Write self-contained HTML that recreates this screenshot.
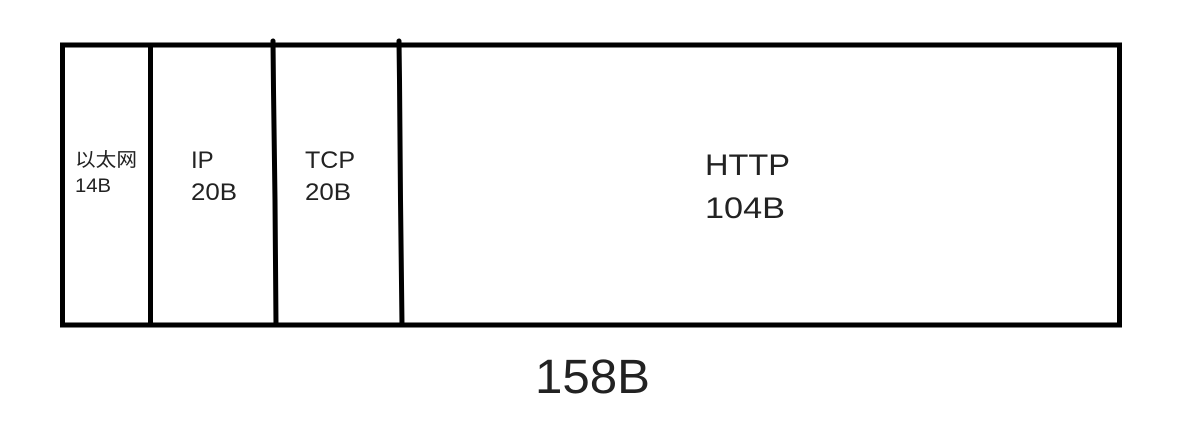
<!DOCTYPE html>
<html><head><meta charset="utf-8"><style>
html,body{margin:0;padding:0;background:#fff;width:1202px;height:447px;overflow:hidden}
svg{display:block}
text{font-family:"Liberation Sans","Noto Sans CJK SC",sans-serif;fill:#222}
</style></head><body>
<svg width="1202" height="447" viewBox="0 0 1202 447">
<rect x="62.5" y="45" width="1057" height="280" fill="none" stroke="#000" stroke-width="5"/>
<line x1="150.5" y1="45" x2="150.5" y2="325" stroke="#000" stroke-width="5"/>
<path d="M273 41 L273.5 90 L275 200 L276 325" fill="none" stroke="#000" stroke-width="5" stroke-linecap="round"/>
<path d="M399 41 L399.5 80 L400.5 200 L402 325" fill="none" stroke="#000" stroke-width="5" stroke-linecap="round"/>
<text x="75" y="166" font-size="19" textLength="62" lengthAdjust="spacingAndGlyphs">以太网</text>
<text x="75" y="192" font-size="19" textLength="36" lengthAdjust="spacingAndGlyphs">14B</text>
<text x="191" y="168" font-size="24">IP</text>
<text x="191" y="200" font-size="24" textLength="46" lengthAdjust="spacingAndGlyphs">20B</text>
<text x="305" y="168" font-size="24" textLength="50" lengthAdjust="spacingAndGlyphs">TCP</text>
<text x="305" y="200" font-size="24" textLength="46" lengthAdjust="spacingAndGlyphs">20B</text>
<text x="705" y="175" font-size="30" textLength="85" lengthAdjust="spacingAndGlyphs">HTTP</text>
<text x="705" y="218" font-size="30" textLength="80" lengthAdjust="spacingAndGlyphs">104B</text>
<text x="535" y="393" font-size="48" textLength="115" lengthAdjust="spacingAndGlyphs">158B</text>
</svg>
</body></html>
